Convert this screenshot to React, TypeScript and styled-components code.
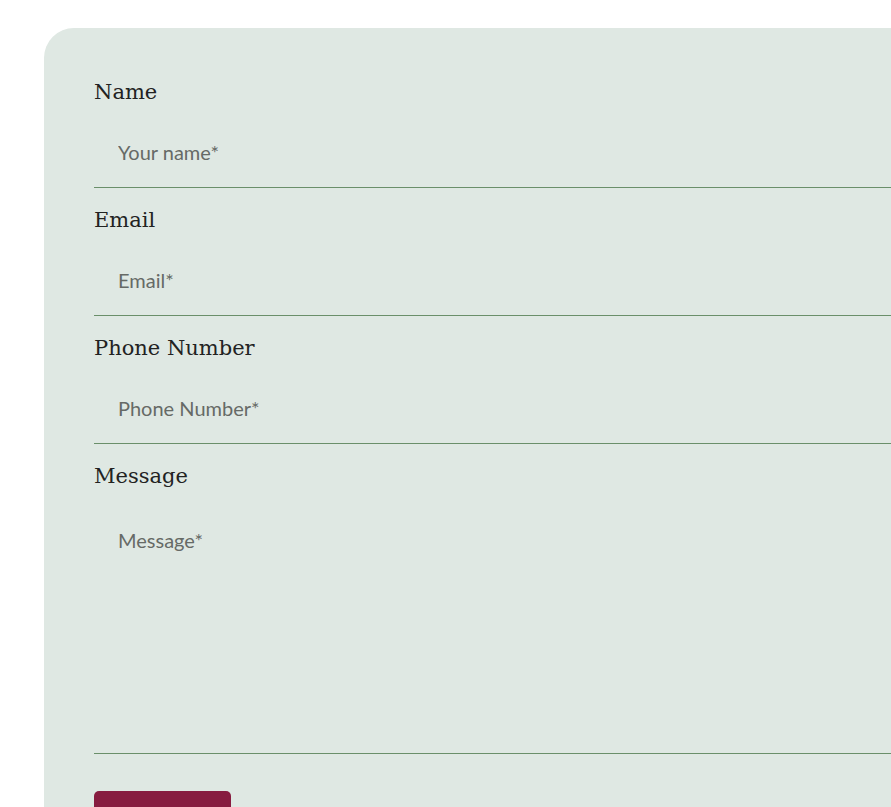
import React from "react";
import styled, { createGlobalStyle } from "styled-components";

const Global = createGlobalStyle`
  html, body { margin: 0; padding: 0; background: #ffffff; overflow: hidden; }
  * { box-sizing: border-box; }
`;

const Page = styled.div`
  padding: 28px 0 0 44px;
  width: 891px;
  height: 807px;
  overflow: hidden;
`;

const Card = styled.form`
  width: 960px;
  min-height: 900px;
  background: #dfe8e3;
  border-radius: 30px 0 0 0;
  padding: 51px 0 0 50px;
  display: flex;
  flex-direction: column;
  gap: 19px;
`;

const Field = styled.div`
  display: flex;
  flex-direction: column;
`;

const Label = styled.label`
  font-family: "DejaVu Serif", serif;
  font-size: 21px;
  line-height: 26px;
  color: #222222;
  margin-bottom: 12px;
`;

const Input = styled.input`
  height: 71px;
  border: none;
  border-bottom: 1px solid #6a8f6a;
  background: transparent;
  padding: 0 24px;
  font-family: Lato, sans-serif;
  font-size: 20px;
  color: #333;
  outline: none;
  &::placeholder { color: #666a66; }
`;

const TextArea = styled.textarea`
  height: 253px;
  border: none;
  border-bottom: 1px solid #6a8f6a;
  background: transparent;
  padding: 27px 24px;
  font-family: Lato, sans-serif;
  font-size: 20px;
  line-height: 24px;
  color: #333;
  resize: none;
  outline: none;
  &::placeholder { color: #666a66; }
`;

const Submit = styled.button`
  margin-top: 18px;
  align-self: flex-start;
  width: 137px;
  height: 90px;
  border: none;
  border-radius: 5px;
  background: #871c40;
  color: #fff;
  font-family: Lato, sans-serif;
  font-size: 18px;
`;

export default function App() {
  return (
    <>
      <Global />
      <Page>
        <Card onSubmit={(e) => e.preventDefault()}>
          <Field>
            <Label>Name</Label>
            <Input placeholder="Your name*" />
          </Field>
          <Field>
            <Label>Email</Label>
            <Input placeholder="Email*" />
          </Field>
          <Field>
            <Label>Phone Number</Label>
            <Input placeholder="Phone Number*" />
          </Field>
          <Field>
            <Label>Message</Label>
            <TextArea placeholder="Message*" />
          </Field>
          <Submit type="submit">Submit</Submit>
        </Card>
      </Page>
    </>
  );
}
